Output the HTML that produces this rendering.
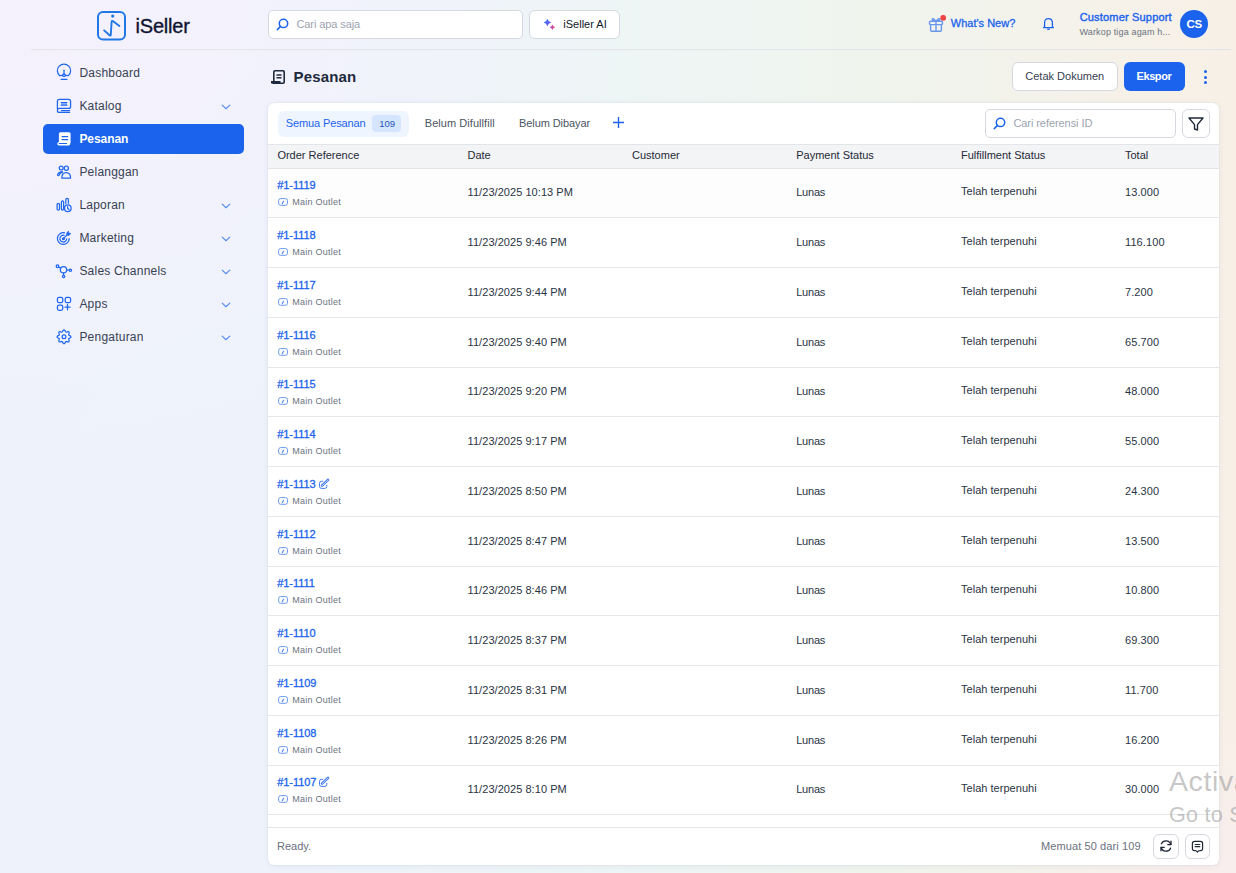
<!DOCTYPE html>
<html><head><meta charset="utf-8">
<style>
*{box-sizing:border-box;margin:0;padding:0}
html,body{width:1236px;height:873px;overflow:hidden}
body{font-family:"Liberation Sans",sans-serif;position:relative;
background:
radial-gradient(ellipse 200px 160px at 1236px 873px, rgba(248,238,238,1), rgba(248,238,238,0)),
radial-gradient(ellipse 650px 450px at 0px 0px, rgba(245,241,253,1), rgba(245,241,253,0)),
linear-gradient(90deg,#eef2fb 0%,#eef3fb 25%,#edf5f5 50%,#f0f4ed 72%,#f8f0e7 100%);}
.t{position:absolute;white-space:nowrap}
.r{position:absolute;display:block}
</style></head><body>
<div class="r" style="left:31px;top:49px;width:1200px;height:1px;background:#e2e4ea"></div>
<svg class="r" style="left:96px;top:10px;" width="31" height="31" viewBox="0 0 31 31"><rect x="2" y="2" width="27" height="27.5" rx="5" fill="none" stroke="#1f78e6" stroke-width="2"/><circle cx="16.7" cy="6.1" r="1.6" fill="#1f78e6"/><path d="M8.1 20.4 L13.6 25.3 Q14.6 26.2 14.8 24.8 L15.6 12 Q15.8 10.2 17.2 11.2 L23.4 15.9" fill="none" stroke="#1f78e6" stroke-width="1.9" stroke-linecap="round" stroke-linejoin="round"/></svg>
<div class="t" style="left:135.5px;top:16.07px;font-size:20px;line-height:20px;color:#0f1430;letter-spacing:-0.2px;-webkit-text-stroke:0.35px #0f1430;">iSeller</div>
<div class="r" style="left:268px;top:10px;width:255px;height:29px;background:#fff;border:1px solid #d5d8de;border-radius:5px"></div>
<svg class="r" style="left:276px;top:17px;" width="14" height="14" viewBox="0 0 14 14"><circle cx="7.5" cy="6.4" r="4.2" fill="none" stroke="#1b63ec" stroke-width="1.5"/><path d="M4.5 9.4 L1.3 12.6" stroke="#1b63ec" stroke-width="1.5" stroke-linecap="round"/></svg>
<div class="t" style="left:296.5px;top:18.99px;font-size:11px;line-height:11px;color:#9ca3af;letter-spacing:-0.1px;">Cari apa saja</div>
<div class="r" style="left:529px;top:10px;width:91px;height:29px;background:#fff;border:1px solid #d5d8de;border-radius:6px"></div>
<svg class="r" style="left:538px;top:12px;" width="24" height="22" viewBox="538 12 24 22"><defs><linearGradient id="g1" gradientUnits="userSpaceOnUse" x1="544" y1="20" x2="551" y2="25"><stop offset="0" stop-color="#2f86ff"/><stop offset="1" stop-color="#7a45f5"/></linearGradient><linearGradient id="g2" gradientUnits="userSpaceOnUse" x1="549.5" y1="27" x2="555.5" y2="27"><stop offset="0" stop-color="#a64fdc"/><stop offset="1" stop-color="#f2465f"/></linearGradient></defs><path d="M547.4 18.7 Q548.236 21.664 551.1999999999999 22.5 Q548.236 23.336 547.4 26.3 Q546.564 23.336 543.6 22.5 Q546.564 21.664 547.4 18.7Z" fill="url(#g1)"/><path d="M552.4 24.4 Q553.016 26.584 555.1999999999999 27.2 Q553.016 27.816 552.4 30.0 Q551.784 27.816 549.6 27.2 Q551.784 26.584 552.4 24.4Z" fill="url(#g2)"/></svg>
<div class="t" style="left:563.3px;top:19.09px;font-size:11px;line-height:11px;color:#111827;">iSeller AI</div>
<svg class="r" style="left:927px;top:15px;" width="20" height="18" viewBox="0 0 20 18"><g fill="none" stroke="#6a97ee" stroke-width="1.4" stroke-linejoin="round"><rect x="2.5" y="6.3" width="13" height="3.3" rx="1"/><path d="M3.6 9.6 V15.3 Q3.6 16.3 4.6 16.3 H13.4 Q14.4 16.3 14.4 15.3 V9.6"/><path d="M9 6.3 V16.3"/><path d="M9 6.3 Q6 2.3 5.2 4.4 Q5 6 9 6.3 Q12 2.3 12.8 4.4 Q13 6 9 6.3"/></g><circle cx="16.2" cy="2.8" r="2.9" fill="#ef4444"/></svg>
<div class="t" style="left:950.8px;top:17.59px;font-size:11px;line-height:11px;color:#1b63ec;-webkit-text-stroke:0.3px #1b63ec;">What's New?</div>
<svg class="r" style="left:1042px;top:17px;" width="13" height="13" viewBox="0 0 13 13"><path d="M2.6 9.6 V5.8 Q2.6 1.6 6.5 1.6 Q10.4 1.6 10.4 5.8 V9.6 L11.4 10.6 H1.6 Z" fill="none" stroke="#1b63ec" stroke-width="1.3" stroke-linejoin="round"/><path d="M5.3 11.8 Q6.5 12.9 7.7 11.8" fill="none" stroke="#1b63ec" stroke-width="1.2"/></svg>
<div class="t" style="left:1079.7px;top:11.89px;font-size:11px;line-height:11px;color:#1b63ec;-webkit-text-stroke:0.4px #1b63ec;letter-spacing:0.18px;">Customer Support</div>
<div class="t" style="left:1079.5px;top:27.58px;font-size:9px;line-height:9px;color:#6b7280;letter-spacing:0.15px;">Warkop tiga agam h...</div>
<div class="r" style="left:1180px;top:10px;width:28px;height:28px;background:#1b63ec;border-radius:50%"></div>
<div class="t" style="left:1186.4px;top:18.67px;font-size:11.5px;line-height:11.5px;color:#fff;font-weight:700;letter-spacing:-0.1px;">CS</div>
<div class="r" style="left:43px;top:124px;width:201px;height:30px;background:#1b63ec;border-radius:5px"></div>
<div class="t" style="left:79.4px;top:66.94px;font-size:12px;line-height:12px;color:#374151;letter-spacing:0.22px;">Dashboard</div>
<div class="t" style="left:79.4px;top:99.94px;font-size:12px;line-height:12px;color:#374151;letter-spacing:0.22px;">Katalog</div>
<svg class="r" style="left:221px;top:102px;" width="10" height="8" viewBox="0 0 10 8"><path d="M1.2 3.1 L5 6.7 L8.8 3.1" fill="none" stroke="#5a8ef0" stroke-width="1.2" stroke-linecap="round" stroke-linejoin="round"/></svg>
<div class="t" style="left:79.4px;top:132.94px;font-size:12px;line-height:12px;color:#fff;font-weight:700;letter-spacing:-0.05px;">Pesanan</div>
<div class="t" style="left:79.4px;top:165.94px;font-size:12px;line-height:12px;color:#374151;letter-spacing:0.22px;">Pelanggan</div>
<div class="t" style="left:79.4px;top:198.94px;font-size:12px;line-height:12px;color:#374151;letter-spacing:0.22px;">Laporan</div>
<svg class="r" style="left:221px;top:201px;" width="10" height="8" viewBox="0 0 10 8"><path d="M1.2 3.1 L5 6.7 L8.8 3.1" fill="none" stroke="#5a8ef0" stroke-width="1.2" stroke-linecap="round" stroke-linejoin="round"/></svg>
<div class="t" style="left:79.4px;top:231.94px;font-size:12px;line-height:12px;color:#374151;letter-spacing:0.22px;">Marketing</div>
<svg class="r" style="left:221px;top:234px;" width="10" height="8" viewBox="0 0 10 8"><path d="M1.2 3.1 L5 6.7 L8.8 3.1" fill="none" stroke="#5a8ef0" stroke-width="1.2" stroke-linecap="round" stroke-linejoin="round"/></svg>
<div class="t" style="left:79.4px;top:264.94px;font-size:12px;line-height:12px;color:#374151;letter-spacing:0.22px;">Sales Channels</div>
<svg class="r" style="left:221px;top:267px;" width="10" height="8" viewBox="0 0 10 8"><path d="M1.2 3.1 L5 6.7 L8.8 3.1" fill="none" stroke="#5a8ef0" stroke-width="1.2" stroke-linecap="round" stroke-linejoin="round"/></svg>
<div class="t" style="left:79.4px;top:297.94px;font-size:12px;line-height:12px;color:#374151;letter-spacing:0.22px;">Apps</div>
<svg class="r" style="left:221px;top:300px;" width="10" height="8" viewBox="0 0 10 8"><path d="M1.2 3.1 L5 6.7 L8.8 3.1" fill="none" stroke="#5a8ef0" stroke-width="1.2" stroke-linecap="round" stroke-linejoin="round"/></svg>
<div class="t" style="left:79.4px;top:330.94px;font-size:12px;line-height:12px;color:#374151;letter-spacing:0.22px;">Pengaturan</div>
<svg class="r" style="left:221px;top:333px;" width="10" height="8" viewBox="0 0 10 8"><path d="M1.2 3.1 L5 6.7 L8.8 3.1" fill="none" stroke="#5a8ef0" stroke-width="1.2" stroke-linecap="round" stroke-linejoin="round"/></svg>
<svg class="r" style="left:52px;top:62px;" width="24" height="22" viewBox="52 62 24 22"><g fill="none" stroke="#1f66ee" stroke-width="1.25" stroke-linecap="round" stroke-linejoin="round"><path d="M59.6 75.6 A6.6 6.6 0 1 1 68.4 75.6 L65.3 75.3 M62.7 75.3 L59.6 75.6"/><circle cx="64" cy="75.2" r="1.3"/><path d="M64 70.2 V73.8"/><path d="M61.2 79.4 H66.9"/></g></svg>
<svg class="r" style="left:52px;top:95px;" width="24" height="22" viewBox="52 95 24 22"><g fill="none" stroke="#1f66ee" stroke-width="1.25" stroke-linecap="round" stroke-linejoin="round"><path d="M57.4 108.4 V101.4 Q57.4 99.4 59.4 99.4 H68.6 Q70.6 99.4 70.6 101.4 V106.4 Q70.6 108.4 68.6 108.4 H59.4 Q57.4 108.4 57.4 110.4 Q57.4 112.4 59.4 112.4 H69.6"/><path d="M61.3 110.5 H69.6"/><path d="M61.2 102.6 H66.9 M61.2 105.2 H66.9"/></g><rect x="61.2" y="102.6" width="5.7" height="2.6" fill="#1f66ee" opacity=".35"/></svg>
<svg class="r" style="left:52px;top:128px;" width="24" height="22" viewBox="52 128 24 22"><g><path d="M58.9 143 V133.8 Q58.9 132.2 60.5 132.2 H69 Q70.6 132.2 70.6 133.8 V143 Z" fill="#fff"/><path d="M59 142.1 H68.8 Q70.3 142.1 70.3 143.8 Q70.3 145.6 68.6 145.6 H59 Q57.3 145.6 57.3 143.85 Q57.3 142.1 59 142.1Z" fill="#fff"/><path d="M59.2 143.5 H66.5" stroke="#1b63ec" stroke-width="1.1" stroke-linecap="round"/><path d="M62.2 136.6 H67.7 M62.2 139.7 H67.7" stroke="#1b63ec" stroke-width="1.3" stroke-linecap="round"/></g></svg>
<svg class="r" style="left:52px;top:161px;" width="24" height="22" viewBox="52 161 24 22"><g fill="none" stroke="#1f66ee" stroke-width="1.25" stroke-linecap="round" stroke-linejoin="round"><circle cx="61.2" cy="168" r="1.9"/><circle cx="66.3" cy="168.3" r="2.1"/><path d="M62.5 171.7 Q58.6 171.8 57.6 174.8 Q57.8 175.9 59 175.4 Q60 172.8 62.1 172.4"/><path d="M61.8 178.1 Q61.8 172.6 66.2 172.6 Q70.6 172.6 70.6 178.1 Z"/></g></svg>
<svg class="r" style="left:52px;top:194px;" width="24" height="22" viewBox="52 194 24 22"><g fill="none" stroke="#1f66ee" stroke-width="1.25" stroke-linecap="round" stroke-linejoin="round"><rect x="57.1" y="203.3" width="2.4" height="6.8" rx="1.2"/><rect x="61.4" y="200.8" width="2.2" height="9.3" rx="1.1"/><path d="M65.8 203.6 V199.6 Q65.8 198.4 67.1 198.4 Q68.4 198.4 68.4 199.6 V203.2"/><circle cx="67.8" cy="208.2" r="3.3"/><path d="M67.6 206.6 V208.4 L69 209.4"/></g></svg>
<svg class="r" style="left:52px;top:227px;" width="24" height="22" viewBox="52 227 24 22"><g fill="none" stroke="#1f66ee" stroke-width="1.25" stroke-linecap="round" stroke-linejoin="round"><path d="M69.2 238.6 A5.9 5.9 0 1 1 64.6 232.8"/><path d="M66.7 238.8 A3.4 3.4 0 1 1 64.1 235.3"/><path d="M63.6 238.4 L67.8 234.2"/></g><circle cx="63.4" cy="238.7" r="1.5" fill="#1f66ee"/><path d="M66.6 233.2 L68.4 231.1 L68.9 233.1 L70.9 233.6 L68.9 235.4 L66.9 235.1 Z" fill="#1f66ee" stroke="#1f66ee" stroke-width="0.6" stroke-linejoin="round"/></svg>
<svg class="r" style="left:52px;top:260px;" width="24" height="22" viewBox="52 260 24 22"><g fill="none" stroke="#1f66ee" stroke-width="1.25" stroke-linecap="round" stroke-linejoin="round"><circle cx="63.5" cy="269.7" r="3.2"/><circle cx="57.5" cy="266.2" r="1.3"/><circle cx="70.4" cy="270.3" r="1.2"/><circle cx="63.6" cy="276.5" r="1.2"/><path d="M58.6 267 L60.8 268.2 M66.7 270 L69.2 270.2 M63.6 272.9 V275.3"/></g></svg>
<svg class="r" style="left:52px;top:293px;" width="24" height="22" viewBox="52 293 24 22"><g fill="none" stroke="#1f66ee" stroke-width="1.25" stroke-linecap="round" stroke-linejoin="round"><rect x="57.4" y="297.3" width="5.4" height="5.4" rx="1.8"/><rect x="65.2" y="297.3" width="5.4" height="5.4" rx="1.8"/><rect x="57.4" y="305.1" width="5.4" height="5.3" rx="1.8"/><path d="M67.5 304.3 V309.8 M65 307.2 H70.1"/></g></svg>
<svg class="r" style="left:52px;top:326px;" width="24" height="22" viewBox="52 326 24 22"><g fill="none" stroke="#1f66ee" stroke-width="1.25" stroke-linecap="round" stroke-linejoin="round"><path d="M64.00 329.90 L64.44 330.04 L64.84 330.41 L65.17 330.92 L65.44 331.44 L65.68 331.86 L65.95 332.09 L66.31 332.12 L66.78 331.99 L67.33 331.81 L67.93 331.68 L68.47 331.70 L68.88 331.92 L69.10 332.33 L69.12 332.87 L68.99 333.47 L68.81 334.03 L68.68 334.49 L68.71 334.85 L68.94 335.12 L69.36 335.36 L69.88 335.63 L70.39 335.96 L70.76 336.36 L70.90 336.80 L70.76 337.24 L70.39 337.64 L69.88 337.97 L69.36 338.24 L68.94 338.48 L68.71 338.75 L68.68 339.11 L68.81 339.57 L68.99 340.13 L69.12 340.73 L69.10 341.27 L68.88 341.68 L68.47 341.90 L67.93 341.92 L67.33 341.79 L66.78 341.61 L66.31 341.48 L65.95 341.51 L65.68 341.74 L65.44 342.16 L65.17 342.68 L64.84 343.19 L64.44 343.56 L64.00 343.70 L63.56 343.56 L63.16 343.19 L62.83 342.68 L62.56 342.16 L62.32 341.74 L62.05 341.51 L61.69 341.48 L61.23 341.61 L60.67 341.79 L60.07 341.92 L59.53 341.90 L59.12 341.68 L58.90 341.27 L58.88 340.73 L59.01 340.13 L59.19 339.57 L59.32 339.11 L59.29 338.75 L59.06 338.48 L58.64 338.24 L58.12 337.97 L57.61 337.64 L57.24 337.24 L57.10 336.80 L57.24 336.36 L57.61 335.96 L58.12 335.63 L58.64 335.36 L59.06 335.12 L59.29 334.85 L59.32 334.49 L59.19 334.03 L59.01 333.47 L58.88 332.87 L58.90 332.33 L59.12 331.92 L59.53 331.70 L60.07 331.68 L60.67 331.81 L61.22 331.99 L61.69 332.12 L62.05 332.09 L62.32 331.86 L62.56 331.44 L62.83 330.92 L63.16 330.41 L63.56 330.04 L64.00 329.90Z"/><circle cx="64" cy="336.8" r="1.9"/></g></svg>
<svg class="r" style="left:270px;top:69px;" width="16" height="16" viewBox="0 0 16 16"><g fill="none" stroke="#1e293b" stroke-width="1.6" stroke-linejoin="round"><path d="M3.8 13.8 V3 Q3.8 1.8 5 1.8 H13 Q14.2 1.8 14.2 3 V13 Q14.2 14.2 13 14.2 H3"/><path d="M6.5 6 H11.5 M6.5 8.8 H11.5"/></g><path d="M1 12 H10.5 V14.8 H2.3 Q1 14.8 1 13.5Z" fill="#1e293b"/></svg>
<div class="t" style="left:293.5px;top:69.20px;font-size:15px;line-height:15px;color:#1e293b;font-weight:700;letter-spacing:0.15px;">Pesanan</div>
<div class="r" style="left:1012px;top:62px;width:106px;height:29px;background:#fff;border:1px solid #d5d8de;border-radius:6px"></div>
<div class="t" style="left:1025.3px;top:70.59px;font-size:11px;line-height:11px;color:#374151;">Cetak Dokumen</div>
<div class="r" style="left:1124px;top:62px;width:61px;height:29px;background:#1b63ec;border-radius:6px"></div>
<div class="t" style="left:1136.5px;top:70.59px;font-size:11px;line-height:11px;color:#fff;font-weight:700;letter-spacing:-0.4px;">Ekspor</div>
<div class="r" style="left:1203.6px;top:70.30000000000001px;width:3.2px;height:3.2px;background:#1b63ec;border-radius:50%"></div>
<div class="r" style="left:1203.6px;top:75.60000000000001px;width:3.2px;height:3.2px;background:#1b63ec;border-radius:50%"></div>
<div class="r" style="left:1203.6px;top:81.0px;width:3.2px;height:3.2px;background:#1b63ec;border-radius:50%"></div>
<div class="r" style="left:268px;top:103px;width:951px;height:762px;background:#fff;border-radius:6px;box-shadow:0 1px 6px rgba(40,60,110,.07),0 0 1.5px rgba(40,60,110,.12)"></div>
<div class="r" style="left:278px;top:111px;width:131px;height:26px;background:#eff5fe;border-radius:6px"></div>
<div class="t" style="left:285.8px;top:117.99px;font-size:11px;line-height:11px;color:#1b63ec;letter-spacing:-0.12px;">Semua Pesanan</div>
<div class="r" style="left:372px;top:115px;width:29px;height:17px;background:#d5e5fd;border-radius:4px"></div>
<div class="t" style="left:379.2px;top:118.76px;font-size:9.5px;line-height:9.5px;color:#2856b8;">109</div>
<div class="t" style="left:424.8px;top:117.99px;font-size:11px;line-height:11px;color:#4b5563;letter-spacing:0.05px;">Belum Difullfill</div>
<div class="t" style="left:519px;top:117.99px;font-size:11px;line-height:11px;color:#4b5563;letter-spacing:-0.08px;">Belum Dibayar</div>
<svg class="r" style="left:612px;top:116px;" width="13" height="13" viewBox="0 0 13 13"><path d="M6.5 1 V12 M1 6.5 H12" stroke="#1b63ec" stroke-width="1.4"/></svg>
<div class="r" style="left:985px;top:109px;width:191px;height:29px;background:#fff;border:1px solid #d5d8de;border-radius:5px"></div>
<svg class="r" style="left:993px;top:116px;" width="14" height="14" viewBox="0 0 14 14"><circle cx="7.5" cy="6.4" r="4.2" fill="none" stroke="#1b63ec" stroke-width="1.5"/><path d="M4.5 9.4 L1.3 12.6" stroke="#1b63ec" stroke-width="1.5" stroke-linecap="round"/></svg>
<div class="t" style="left:1013.4px;top:118.19px;font-size:11px;line-height:11px;color:#9ca3af;letter-spacing:-0.07px;">Cari referensi ID</div>
<div class="r" style="left:1182px;top:109px;width:28px;height:29px;background:#fff;border:1px solid #d5d8de;border-radius:6px"></div>
<svg class="r" style="left:1187px;top:116px;" width="18" height="16" viewBox="0 0 18 16"><path d="M2 2 H16 L10.5 8.6 V14 L7.5 13 V8.6 Z" fill="none" stroke="#1f2937" stroke-width="1.4" stroke-linejoin="round"/></svg>
<div class="r" style="left:268px;top:144px;width:951px;height:25px;background:#f3f4f6;border-top:1px solid #e3e5e9;border-bottom:1px solid #e3e5e9"></div>
<div class="t" style="left:277.4px;top:149.99px;font-size:11px;line-height:11px;color:#1f2937;">Order Reference</div>
<div class="t" style="left:467.5px;top:149.99px;font-size:11px;line-height:11px;color:#1f2937;">Date</div>
<div class="t" style="left:632px;top:149.99px;font-size:11px;line-height:11px;color:#1f2937;">Customer</div>
<div class="t" style="left:796.2px;top:149.99px;font-size:11px;line-height:11px;color:#1f2937;">Payment Status</div>
<div class="t" style="left:961px;top:149.99px;font-size:11px;line-height:11px;color:#1f2937;">Fulfillment Status</div>
<div class="t" style="left:1125px;top:149.99px;font-size:11px;line-height:11px;color:#1f2937;">Total</div>
<div class="r" style="left:268px;top:169px;width:951px;height:48px;background:#fdfdfe"></div>
<div class="r" style="left:268px;top:217px;width:951px;height:1px;background:#e5e7eb"></div>
<div class="t" style="left:277.2px;top:180.09px;font-size:11px;line-height:11px;color:#1b63ec;-webkit-text-stroke:0.3px #1b63ec;letter-spacing:-0.05px;">#1-1119</div>
<svg class="r" style="left:276px;top:196px;" width="14" height="12" viewBox="276 196 14 12"><rect x="278.6" y="198.6" width="8.9" height="6.7" rx="2.1" fill="none" stroke="#6b98f0" stroke-width="1"/><path d="M282.2 203.6 L283.6 201.3" stroke="#5b8def" stroke-width="1.2" stroke-linecap="round"/></svg>
<div class="t" style="left:292.2px;top:197.88px;font-size:9px;line-height:9px;color:#6b7280;letter-spacing:0.25px;">Main Outlet</div>
<div class="t" style="left:467.6px;top:186.89px;font-size:11px;line-height:11px;color:#2b3443;letter-spacing:0.05px;">11/23/2025 10:13 PM</div>
<div class="t" style="left:796.2px;top:186.89px;font-size:11px;line-height:11px;color:#2b3443;letter-spacing:-0.2px;">Lunas</div>
<div class="t" style="left:961px;top:185.59px;font-size:11px;line-height:11px;color:#2b3443;letter-spacing:0.03px;">Telah terpenuhi</div>
<div class="t" style="left:1125px;top:186.99px;font-size:11px;line-height:11px;color:#2b3443;letter-spacing:0.1px;">13.000</div>
<div class="r" style="left:268px;top:267px;width:951px;height:1px;background:#e5e7eb"></div>
<div class="t" style="left:277.2px;top:230.09px;font-size:11px;line-height:11px;color:#1b63ec;-webkit-text-stroke:0.3px #1b63ec;letter-spacing:-0.05px;">#1-1118</div>
<svg class="r" style="left:276px;top:246px;" width="14" height="12" viewBox="276 196 14 12"><rect x="278.6" y="198.6" width="8.9" height="6.7" rx="2.1" fill="none" stroke="#6b98f0" stroke-width="1"/><path d="M282.2 203.6 L283.6 201.3" stroke="#5b8def" stroke-width="1.2" stroke-linecap="round"/></svg>
<div class="t" style="left:292.2px;top:247.88px;font-size:9px;line-height:9px;color:#6b7280;letter-spacing:0.25px;">Main Outlet</div>
<div class="t" style="left:467.6px;top:236.89px;font-size:11px;line-height:11px;color:#2b3443;letter-spacing:0.05px;">11/23/2025 9:46 PM</div>
<div class="t" style="left:796.2px;top:236.89px;font-size:11px;line-height:11px;color:#2b3443;letter-spacing:-0.2px;">Lunas</div>
<div class="t" style="left:961px;top:235.59px;font-size:11px;line-height:11px;color:#2b3443;letter-spacing:0.03px;">Telah terpenuhi</div>
<div class="t" style="left:1125px;top:236.99px;font-size:11px;line-height:11px;color:#2b3443;letter-spacing:0.1px;">116.100</div>
<div class="r" style="left:268px;top:317px;width:951px;height:1px;background:#e5e7eb"></div>
<div class="t" style="left:277.2px;top:280.09px;font-size:11px;line-height:11px;color:#1b63ec;-webkit-text-stroke:0.3px #1b63ec;letter-spacing:-0.05px;">#1-1117</div>
<svg class="r" style="left:276px;top:296px;" width="14" height="12" viewBox="276 196 14 12"><rect x="278.6" y="198.6" width="8.9" height="6.7" rx="2.1" fill="none" stroke="#6b98f0" stroke-width="1"/><path d="M282.2 203.6 L283.6 201.3" stroke="#5b8def" stroke-width="1.2" stroke-linecap="round"/></svg>
<div class="t" style="left:292.2px;top:297.88px;font-size:9px;line-height:9px;color:#6b7280;letter-spacing:0.25px;">Main Outlet</div>
<div class="t" style="left:467.6px;top:286.89px;font-size:11px;line-height:11px;color:#2b3443;letter-spacing:0.05px;">11/23/2025 9:44 PM</div>
<div class="t" style="left:796.2px;top:286.89px;font-size:11px;line-height:11px;color:#2b3443;letter-spacing:-0.2px;">Lunas</div>
<div class="t" style="left:961px;top:285.59px;font-size:11px;line-height:11px;color:#2b3443;letter-spacing:0.03px;">Telah terpenuhi</div>
<div class="t" style="left:1125px;top:286.99px;font-size:11px;line-height:11px;color:#2b3443;letter-spacing:0.1px;">7.200</div>
<div class="r" style="left:268px;top:367px;width:951px;height:1px;background:#e5e7eb"></div>
<div class="t" style="left:277.2px;top:330.09px;font-size:11px;line-height:11px;color:#1b63ec;-webkit-text-stroke:0.3px #1b63ec;letter-spacing:-0.05px;">#1-1116</div>
<svg class="r" style="left:276px;top:346px;" width="14" height="12" viewBox="276 196 14 12"><rect x="278.6" y="198.6" width="8.9" height="6.7" rx="2.1" fill="none" stroke="#6b98f0" stroke-width="1"/><path d="M282.2 203.6 L283.6 201.3" stroke="#5b8def" stroke-width="1.2" stroke-linecap="round"/></svg>
<div class="t" style="left:292.2px;top:347.88px;font-size:9px;line-height:9px;color:#6b7280;letter-spacing:0.25px;">Main Outlet</div>
<div class="t" style="left:467.6px;top:336.89px;font-size:11px;line-height:11px;color:#2b3443;letter-spacing:0.05px;">11/23/2025 9:40 PM</div>
<div class="t" style="left:796.2px;top:336.89px;font-size:11px;line-height:11px;color:#2b3443;letter-spacing:-0.2px;">Lunas</div>
<div class="t" style="left:961px;top:335.59px;font-size:11px;line-height:11px;color:#2b3443;letter-spacing:0.03px;">Telah terpenuhi</div>
<div class="t" style="left:1125px;top:336.99px;font-size:11px;line-height:11px;color:#2b3443;letter-spacing:0.1px;">65.700</div>
<div class="r" style="left:268px;top:416px;width:951px;height:1px;background:#e5e7eb"></div>
<div class="t" style="left:277.2px;top:379.09px;font-size:11px;line-height:11px;color:#1b63ec;-webkit-text-stroke:0.3px #1b63ec;letter-spacing:-0.05px;">#1-1115</div>
<svg class="r" style="left:276px;top:395px;" width="14" height="12" viewBox="276 196 14 12"><rect x="278.6" y="198.6" width="8.9" height="6.7" rx="2.1" fill="none" stroke="#6b98f0" stroke-width="1"/><path d="M282.2 203.6 L283.6 201.3" stroke="#5b8def" stroke-width="1.2" stroke-linecap="round"/></svg>
<div class="t" style="left:292.2px;top:396.88px;font-size:9px;line-height:9px;color:#6b7280;letter-spacing:0.25px;">Main Outlet</div>
<div class="t" style="left:467.6px;top:385.89px;font-size:11px;line-height:11px;color:#2b3443;letter-spacing:0.05px;">11/23/2025 9:20 PM</div>
<div class="t" style="left:796.2px;top:385.89px;font-size:11px;line-height:11px;color:#2b3443;letter-spacing:-0.2px;">Lunas</div>
<div class="t" style="left:961px;top:384.59px;font-size:11px;line-height:11px;color:#2b3443;letter-spacing:0.03px;">Telah terpenuhi</div>
<div class="t" style="left:1125px;top:385.99px;font-size:11px;line-height:11px;color:#2b3443;letter-spacing:0.1px;">48.000</div>
<div class="r" style="left:268px;top:466px;width:951px;height:1px;background:#e5e7eb"></div>
<div class="t" style="left:277.2px;top:429.09px;font-size:11px;line-height:11px;color:#1b63ec;-webkit-text-stroke:0.3px #1b63ec;letter-spacing:-0.05px;">#1-1114</div>
<svg class="r" style="left:276px;top:445px;" width="14" height="12" viewBox="276 196 14 12"><rect x="278.6" y="198.6" width="8.9" height="6.7" rx="2.1" fill="none" stroke="#6b98f0" stroke-width="1"/><path d="M282.2 203.6 L283.6 201.3" stroke="#5b8def" stroke-width="1.2" stroke-linecap="round"/></svg>
<div class="t" style="left:292.2px;top:446.88px;font-size:9px;line-height:9px;color:#6b7280;letter-spacing:0.25px;">Main Outlet</div>
<div class="t" style="left:467.6px;top:435.89px;font-size:11px;line-height:11px;color:#2b3443;letter-spacing:0.05px;">11/23/2025 9:17 PM</div>
<div class="t" style="left:796.2px;top:435.89px;font-size:11px;line-height:11px;color:#2b3443;letter-spacing:-0.2px;">Lunas</div>
<div class="t" style="left:961px;top:434.59px;font-size:11px;line-height:11px;color:#2b3443;letter-spacing:0.03px;">Telah terpenuhi</div>
<div class="t" style="left:1125px;top:435.99px;font-size:11px;line-height:11px;color:#2b3443;letter-spacing:0.1px;">55.000</div>
<div class="r" style="left:268px;top:516px;width:951px;height:1px;background:#e5e7eb"></div>
<div class="t" style="left:277.2px;top:479.09px;font-size:11px;line-height:11px;color:#1b63ec;-webkit-text-stroke:0.3px #1b63ec;letter-spacing:-0.05px;">#1-1113</div>
<svg class="r" style="left:318px;top:477px;" width="13" height="13" viewBox="318 178 13 13"><g fill="none" stroke-linecap="round" stroke-linejoin="round"><path d="M322.7 182.3 H321.5 Q319.5 182.3 319.5 184.3 V187.4 Q319.5 189.4 321.5 189.4 H324.8 Q326.8 189.4 326.8 187.4 V186.3" stroke="#3f7af0" stroke-width="1"/><path d="M322 186.7 L328 180.9" stroke="#2f6ff0" stroke-width="2.5"/><path d="M322 186.7 L328 180.9" stroke="#fff" stroke-width="0.8"/></g></svg>
<svg class="r" style="left:276px;top:495px;" width="14" height="12" viewBox="276 196 14 12"><rect x="278.6" y="198.6" width="8.9" height="6.7" rx="2.1" fill="none" stroke="#6b98f0" stroke-width="1"/><path d="M282.2 203.6 L283.6 201.3" stroke="#5b8def" stroke-width="1.2" stroke-linecap="round"/></svg>
<div class="t" style="left:292.2px;top:496.88px;font-size:9px;line-height:9px;color:#6b7280;letter-spacing:0.25px;">Main Outlet</div>
<div class="t" style="left:467.6px;top:485.89px;font-size:11px;line-height:11px;color:#2b3443;letter-spacing:0.05px;">11/23/2025 8:50 PM</div>
<div class="t" style="left:796.2px;top:485.89px;font-size:11px;line-height:11px;color:#2b3443;letter-spacing:-0.2px;">Lunas</div>
<div class="t" style="left:961px;top:484.59px;font-size:11px;line-height:11px;color:#2b3443;letter-spacing:0.03px;">Telah terpenuhi</div>
<div class="t" style="left:1125px;top:485.99px;font-size:11px;line-height:11px;color:#2b3443;letter-spacing:0.1px;">24.300</div>
<div class="r" style="left:268px;top:566px;width:951px;height:1px;background:#e5e7eb"></div>
<div class="t" style="left:277.2px;top:529.09px;font-size:11px;line-height:11px;color:#1b63ec;-webkit-text-stroke:0.3px #1b63ec;letter-spacing:-0.05px;">#1-1112</div>
<svg class="r" style="left:276px;top:545px;" width="14" height="12" viewBox="276 196 14 12"><rect x="278.6" y="198.6" width="8.9" height="6.7" rx="2.1" fill="none" stroke="#6b98f0" stroke-width="1"/><path d="M282.2 203.6 L283.6 201.3" stroke="#5b8def" stroke-width="1.2" stroke-linecap="round"/></svg>
<div class="t" style="left:292.2px;top:546.88px;font-size:9px;line-height:9px;color:#6b7280;letter-spacing:0.25px;">Main Outlet</div>
<div class="t" style="left:467.6px;top:535.89px;font-size:11px;line-height:11px;color:#2b3443;letter-spacing:0.05px;">11/23/2025 8:47 PM</div>
<div class="t" style="left:796.2px;top:535.89px;font-size:11px;line-height:11px;color:#2b3443;letter-spacing:-0.2px;">Lunas</div>
<div class="t" style="left:961px;top:534.59px;font-size:11px;line-height:11px;color:#2b3443;letter-spacing:0.03px;">Telah terpenuhi</div>
<div class="t" style="left:1125px;top:535.99px;font-size:11px;line-height:11px;color:#2b3443;letter-spacing:0.1px;">13.500</div>
<div class="r" style="left:268px;top:615px;width:951px;height:1px;background:#e5e7eb"></div>
<div class="t" style="left:277.2px;top:578.09px;font-size:11px;line-height:11px;color:#1b63ec;-webkit-text-stroke:0.3px #1b63ec;letter-spacing:-0.05px;">#1-1111</div>
<svg class="r" style="left:276px;top:594px;" width="14" height="12" viewBox="276 196 14 12"><rect x="278.6" y="198.6" width="8.9" height="6.7" rx="2.1" fill="none" stroke="#6b98f0" stroke-width="1"/><path d="M282.2 203.6 L283.6 201.3" stroke="#5b8def" stroke-width="1.2" stroke-linecap="round"/></svg>
<div class="t" style="left:292.2px;top:595.88px;font-size:9px;line-height:9px;color:#6b7280;letter-spacing:0.25px;">Main Outlet</div>
<div class="t" style="left:467.6px;top:584.89px;font-size:11px;line-height:11px;color:#2b3443;letter-spacing:0.05px;">11/23/2025 8:46 PM</div>
<div class="t" style="left:796.2px;top:584.89px;font-size:11px;line-height:11px;color:#2b3443;letter-spacing:-0.2px;">Lunas</div>
<div class="t" style="left:961px;top:583.59px;font-size:11px;line-height:11px;color:#2b3443;letter-spacing:0.03px;">Telah terpenuhi</div>
<div class="t" style="left:1125px;top:584.99px;font-size:11px;line-height:11px;color:#2b3443;letter-spacing:0.1px;">10.800</div>
<div class="r" style="left:268px;top:665px;width:951px;height:1px;background:#e5e7eb"></div>
<div class="t" style="left:277.2px;top:628.09px;font-size:11px;line-height:11px;color:#1b63ec;-webkit-text-stroke:0.3px #1b63ec;letter-spacing:-0.05px;">#1-1110</div>
<svg class="r" style="left:276px;top:644px;" width="14" height="12" viewBox="276 196 14 12"><rect x="278.6" y="198.6" width="8.9" height="6.7" rx="2.1" fill="none" stroke="#6b98f0" stroke-width="1"/><path d="M282.2 203.6 L283.6 201.3" stroke="#5b8def" stroke-width="1.2" stroke-linecap="round"/></svg>
<div class="t" style="left:292.2px;top:645.88px;font-size:9px;line-height:9px;color:#6b7280;letter-spacing:0.25px;">Main Outlet</div>
<div class="t" style="left:467.6px;top:634.89px;font-size:11px;line-height:11px;color:#2b3443;letter-spacing:0.05px;">11/23/2025 8:37 PM</div>
<div class="t" style="left:796.2px;top:634.89px;font-size:11px;line-height:11px;color:#2b3443;letter-spacing:-0.2px;">Lunas</div>
<div class="t" style="left:961px;top:633.59px;font-size:11px;line-height:11px;color:#2b3443;letter-spacing:0.03px;">Telah terpenuhi</div>
<div class="t" style="left:1125px;top:634.99px;font-size:11px;line-height:11px;color:#2b3443;letter-spacing:0.1px;">69.300</div>
<div class="r" style="left:268px;top:715px;width:951px;height:1px;background:#e5e7eb"></div>
<div class="t" style="left:277.2px;top:678.09px;font-size:11px;line-height:11px;color:#1b63ec;-webkit-text-stroke:0.3px #1b63ec;letter-spacing:-0.05px;">#1-1109</div>
<svg class="r" style="left:276px;top:694px;" width="14" height="12" viewBox="276 196 14 12"><rect x="278.6" y="198.6" width="8.9" height="6.7" rx="2.1" fill="none" stroke="#6b98f0" stroke-width="1"/><path d="M282.2 203.6 L283.6 201.3" stroke="#5b8def" stroke-width="1.2" stroke-linecap="round"/></svg>
<div class="t" style="left:292.2px;top:695.88px;font-size:9px;line-height:9px;color:#6b7280;letter-spacing:0.25px;">Main Outlet</div>
<div class="t" style="left:467.6px;top:684.89px;font-size:11px;line-height:11px;color:#2b3443;letter-spacing:0.05px;">11/23/2025 8:31 PM</div>
<div class="t" style="left:796.2px;top:684.89px;font-size:11px;line-height:11px;color:#2b3443;letter-spacing:-0.2px;">Lunas</div>
<div class="t" style="left:961px;top:683.59px;font-size:11px;line-height:11px;color:#2b3443;letter-spacing:0.03px;">Telah terpenuhi</div>
<div class="t" style="left:1125px;top:684.99px;font-size:11px;line-height:11px;color:#2b3443;letter-spacing:0.1px;">11.700</div>
<div class="r" style="left:268px;top:765px;width:951px;height:1px;background:#e5e7eb"></div>
<div class="t" style="left:277.2px;top:728.09px;font-size:11px;line-height:11px;color:#1b63ec;-webkit-text-stroke:0.3px #1b63ec;letter-spacing:-0.05px;">#1-1108</div>
<svg class="r" style="left:276px;top:744px;" width="14" height="12" viewBox="276 196 14 12"><rect x="278.6" y="198.6" width="8.9" height="6.7" rx="2.1" fill="none" stroke="#6b98f0" stroke-width="1"/><path d="M282.2 203.6 L283.6 201.3" stroke="#5b8def" stroke-width="1.2" stroke-linecap="round"/></svg>
<div class="t" style="left:292.2px;top:745.88px;font-size:9px;line-height:9px;color:#6b7280;letter-spacing:0.25px;">Main Outlet</div>
<div class="t" style="left:467.6px;top:734.89px;font-size:11px;line-height:11px;color:#2b3443;letter-spacing:0.05px;">11/23/2025 8:26 PM</div>
<div class="t" style="left:796.2px;top:734.89px;font-size:11px;line-height:11px;color:#2b3443;letter-spacing:-0.2px;">Lunas</div>
<div class="t" style="left:961px;top:733.59px;font-size:11px;line-height:11px;color:#2b3443;letter-spacing:0.03px;">Telah terpenuhi</div>
<div class="t" style="left:1125px;top:734.99px;font-size:11px;line-height:11px;color:#2b3443;letter-spacing:0.1px;">16.200</div>
<div class="r" style="left:268px;top:814px;width:951px;height:1px;background:#e5e7eb"></div>
<div class="t" style="left:277.2px;top:777.09px;font-size:11px;line-height:11px;color:#1b63ec;-webkit-text-stroke:0.3px #1b63ec;letter-spacing:-0.05px;">#1-1107</div>
<svg class="r" style="left:318px;top:775px;" width="13" height="13" viewBox="318 178 13 13"><g fill="none" stroke-linecap="round" stroke-linejoin="round"><path d="M322.7 182.3 H321.5 Q319.5 182.3 319.5 184.3 V187.4 Q319.5 189.4 321.5 189.4 H324.8 Q326.8 189.4 326.8 187.4 V186.3" stroke="#3f7af0" stroke-width="1"/><path d="M322 186.7 L328 180.9" stroke="#2f6ff0" stroke-width="2.5"/><path d="M322 186.7 L328 180.9" stroke="#fff" stroke-width="0.8"/></g></svg>
<svg class="r" style="left:276px;top:793px;" width="14" height="12" viewBox="276 196 14 12"><rect x="278.6" y="198.6" width="8.9" height="6.7" rx="2.1" fill="none" stroke="#6b98f0" stroke-width="1"/><path d="M282.2 203.6 L283.6 201.3" stroke="#5b8def" stroke-width="1.2" stroke-linecap="round"/></svg>
<div class="t" style="left:292.2px;top:794.88px;font-size:9px;line-height:9px;color:#6b7280;letter-spacing:0.25px;">Main Outlet</div>
<div class="t" style="left:467.6px;top:783.89px;font-size:11px;line-height:11px;color:#2b3443;letter-spacing:0.05px;">11/23/2025 8:10 PM</div>
<div class="t" style="left:796.2px;top:783.89px;font-size:11px;line-height:11px;color:#2b3443;letter-spacing:-0.2px;">Lunas</div>
<div class="t" style="left:961px;top:782.59px;font-size:11px;line-height:11px;color:#2b3443;letter-spacing:0.03px;">Telah terpenuhi</div>
<div class="t" style="left:1125px;top:783.99px;font-size:11px;line-height:11px;color:#2b3443;letter-spacing:0.1px;">30.000</div>
<div class="r" style="left:268px;top:827px;width:951px;height:1px;background:#e3e5e9"></div>
<div class="t" style="left:277px;top:840.69px;font-size:11px;line-height:11px;color:#6b7280;">Ready.</div>
<div class="t" style="left:1041px;top:840.99px;font-size:11px;line-height:11px;color:#6b7280;letter-spacing:0.1px;">Memuat 50 dari 109</div>
<div class="r" style="left:1153px;top:834px;width:26px;height:25px;background:#fff;border:1px solid #d5d8de;border-radius:6px"></div>
<svg class="r" style="left:1158px;top:838px;" width="16" height="16" viewBox="0 0 16 16"><g fill="none" stroke="#1f2937" stroke-width="1.3" stroke-linecap="round" stroke-linejoin="round"><path d="M12.8 6.5 A5 5 0 0 0 3.4 5.8"/><path d="M3.2 9.5 A5 5 0 0 0 12.6 10.2"/><path d="M13 3.2 V6.6 H9.8"/><path d="M3 12.8 V9.4 H6.2"/></g></svg>
<div class="r" style="left:1185px;top:834px;width:25px;height:25px;background:#fff;border:1px solid #d5d8de;border-radius:6px"></div>
<svg class="r" style="left:1186px;top:834px;" width="24" height="24" viewBox="1186 834 24 24"><g fill="none" stroke="#1f2937" stroke-width="1.2" stroke-linejoin="round" stroke-linecap="round"><path d="M1195.4 850.7 H1194.6 Q1192.4 850.7 1192.4 848.5 V843.5 Q1192.4 841.3 1194.6 841.3 H1200.4 Q1202.6 841.3 1202.6 843.5 V848.5 Q1202.6 850.7 1200.4 850.7 H1199.6 M1196.3 850.9 L1197.5 852 L1198.7 850.9"/><path d="M1195.2 844.5 H1199.8 M1195.2 846.7 H1199.8"/></g></svg>
<div class="t" style="left:1169px;top:766.67px;font-size:28.5px;line-height:28.5px;color:rgba(150,150,150,.55);letter-spacing:0.6px;">Activate Windows</div>
<div class="t" style="left:1169px;top:804.70px;font-size:21.5px;line-height:21.5px;color:rgba(150,150,150,.55);letter-spacing:0.3px;">Go to Settings to activate Windows.</div>
</body></html>
